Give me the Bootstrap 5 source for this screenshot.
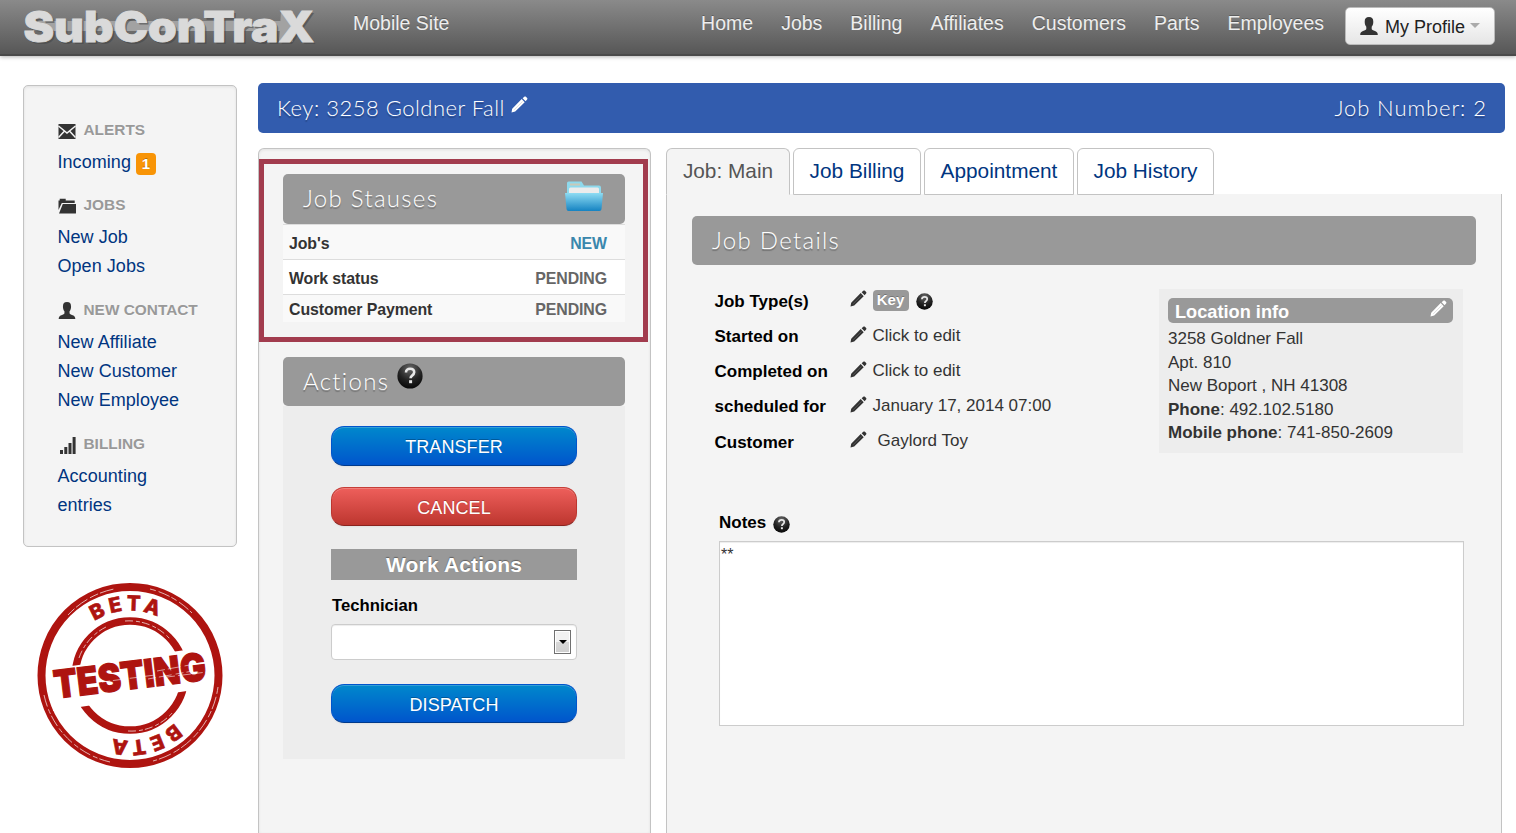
<!DOCTYPE html>
<html lang="en">
<head>
<meta charset="utf-8">
<meta name="viewport" content="width=device-width, initial-scale=1">
<title>SubConTraX - Job 2</title>
<link href="https://cdn.jsdelivr.net/npm/bootstrap@5.3.0/dist/css/bootstrap.min.css" rel="stylesheet">
<style>
body{font-family:"Liberation Sans",Arial,sans-serif;font-size:17px;line-height:23.6px;color:#333;background:#fff;height:833px;overflow:hidden}
a{color:#003580;text-decoration:none}
svg{display:block;flex:none}
.topbar{height:56px;padding:0 21px 0 23px;background:linear-gradient(#8a8a8a,#575757);border-bottom:2px solid #4a4a4a;box-shadow:0 1px 4px rgba(0,0,0,.3);align-items:flex-start}
.topbar .nav-link{font-size:19.5px;line-height:24px;color:#eee;padding:11px 0 0;text-shadow:0 -1px 0 rgba(0,0,0,.25)}
.mobile-link{margin-left:20px}
.main-links{gap:28px;margin-right:21px}
.profile-btn{width:150px;height:38px;margin-top:7px;padding:1px 0 0 14px;font-size:18px;line-height:24px;color:#222;background:linear-gradient(#fff,#e6e6e6);border:1px solid #bbb;border-radius:5px;display:flex;align-items:center}
.profile-btn svg{margin:-2px 7px 0 0;color:#333}
.caret{width:0;height:0;border:5px solid transparent;border-top-color:#aaa;border-bottom:0;margin:-3px 0 0 5px}
.side-col{width:235px;flex:none;margin-left:23px}
.side{width:214px;height:462px;margin-top:29px;padding:16px 33px 0 33.5px;background:#f4f4f4;border:1px solid #c3c3c3;border-radius:5px;box-shadow:inset 0 1px 3px rgba(0,0,0,.08)}
.side-head{height:47px;padding-top:10px;font-size:15.4px;font-weight:bold;color:#999;display:flex;align-items:center;white-space:nowrap;text-shadow:0 1px 0 rgba(255,255,255,.5)}
.side-head svg{margin:3px 8px 0 0}
.side a{display:block;font-size:18px;line-height:29px;letter-spacing:.05px}
.count{background:#f89406;color:#fff;font-size:15px;line-height:22px;width:20px;height:22px;border-radius:4px;padding:0;margin-left:5px;vertical-align:-1px;text-shadow:0 -1px 0 rgba(0,0,0,.25)}
.gothic{font-family:"Century Gothic","URW Gothic",Lato,sans-serif;font-weight:300;color:#fff;text-shadow:0 2px 1px rgba(0,0,0,.25);white-space:nowrap}
.keybar{height:50px;margin-top:27px;padding:0 19px 1px;background:#325cae;border-radius:5px;font-size:22px}
.key-title{letter-spacing:.5px}
.job-no{letter-spacing:.9px;margin-right:-.8px}
.panel-box{background:#f4f4f4;border:1px solid #c3c3c3;border-bottom:0}
.status-panel{width:393px;border-radius:6px 6px 0 0;box-shadow:inset 0 1px 3px rgba(0,0,0,.08)}
.frame{width:389px;height:183px;margin-top:10px;border:5px solid #a23c4e;padding:10px 18px 0 19px}
.gray-head{background:#999;border-radius:5px;height:49px;padding:0 20px 1px;font-size:24px;letter-spacing:1.3px;display:flex;align-items:center}
.st-row{border-top:1px solid #ddd;height:35px;padding:4px 18px 0 6px;display:flex;justify-content:space-between;align-items:center;font-size:15.9px;font-weight:bold;background:#f9f9f9;letter-spacing:-.1px}
.actions{margin:15px 25px 0 24px}
.action-body{background:#ededed;height:353px;padding:20px 48px 0}
.act{display:block;width:100%;height:39px;padding:2px 0 0;border-radius:13px;color:#fff;font-size:18px;line-height:34px;letter-spacing:.08px;text-shadow:0 -1px 0 rgba(0,0,0,.25);box-shadow:inset 0 1px 0 rgba(255,255,255,.2),0 1px 2px rgba(0,0,0,.05);border:1px solid}
.act:hover{color:#fff}
.act-blue{background:linear-gradient(#08c,#05c);border-color:#05c #05c #003a8c}
.act-red{background:linear-gradient(#ee5f5b,#bd362f);border-color:#c63e38 #bd362f #8a231e}
.work-head{height:31px;background:#999;color:#fff;font-size:21px;font-weight:bold;line-height:32px;letter-spacing:.15px;text-align:center;margin:23px 0 0;text-shadow:0 -1px 1px rgba(0,0,0,.35)}
.lbl{font-weight:bold;color:#000}
.pick{height:36px;background:#fff;border:1px solid #ccc;border-radius:4px;padding:5px;box-shadow:inset 0 1px 1px rgba(0,0,0,.075)}
.pick-arrow{width:17px;height:24px;border:1px solid #707070;background:linear-gradient(#f2f2f2 50%,#d8d8d8 50%,#cfcfcf);box-shadow:inset 0 0 0 1px #fff;display:flex;align-items:center;justify-content:center}
.pick-arrow i{border:4px solid transparent;border-top-color:#000;border-bottom:0}
.job-tabs{gap:3px;border:0;height:46px;flex-wrap:nowrap;position:relative;z-index:1}
.job-tabs .nav-link{height:47px;padding:10px 0 0;font-size:20.8px;line-height:24px;text-align:center;color:#003580;background:#fff;border:1px solid #c3c3c3;border-radius:6px 6px 0 0;margin:0}
.job-tabs .nav-link.active{background:#f4f4f4;color:#555;border-color:#c3c3c3 #c3c3c3 #f4f4f4}
.tab-main{width:124px}.tab-bill{width:128px}.tab-app{width:150px}.tab-hist{width:137px}
.detail-pane{width:836px;border-top:0;padding:22px 25px 0}
.fields{width:445px;padding:18px 0 0 22.5px}
.field{height:35.2px;display:flex;align-items:center}
.field .lbl{width:135px;padding-top:2px}
.field svg{margin:-3px 6px 0 0}
.key-tag{background:#999;color:#fff;font-size:15px;line-height:19px;height:21px;width:36px;padding:0;border-radius:4px;text-shadow:0 -1px 0 rgba(0,0,0,.25)}
.loc{width:304px;height:164px;margin:24px 13px 0 0;padding:9px 10px 0 9px;background:#ededed}
.loc-head{height:25px;background:#999;border-radius:5px;color:#fff;font-size:18.2px;font-weight:bold;line-height:28px;padding:0 6px 0 7px;margin-bottom:4px}
.notes{margin:44px 12px 0 27px}
.note-box{display:block;width:100%;height:185px;border:1px solid #ccc;border-radius:0;background:#fff;padding:2px 1px;font-size:16px;line-height:22px;color:#333;resize:none;box-shadow:inset 0 1px 1px rgba(0,0,0,.075)}
</style>
</head>
<body>
<svg width="0" height="0" class="position-absolute" aria-hidden="true">
<defs>
<symbol id="pencil" viewBox="0 0 17 17"><path d="M.5 16.500 1.200 12.800 10.700 3.100l3 3.200L4.200 15.600zM11.600 2.300 13.300.8c.5-.5 1.100-.5 1.600 0l1.200 1.200c.5.5.5 1.100 0 1.600L14.600 5.300z" fill="currentColor"/><path d="M3.300 13.800 11.500 5.500" stroke="#999" stroke-width=".5" opacity=".6"/></symbol>
<symbol id="user" viewBox="0 0 18 18"><path d="M9 0c3 0 4.300 1.500 4.300 4.700 0 2.300-.6 4-1.600 5v2.200c0 1 1.300 1.200 3.300 2 2 .8 2.800 1.800 2.800 4.100H.2c0-2.300.8-3.300 2.800-4.100 2-.8 3.300-1 3.300-2V9.700c-1-1-1.600-2.700-1.600-5C4.700 1.500 6 0 9 0z" fill="currentColor"/></symbol>
<radialGradient id="orb" cx=".5" cy=".2" r=".8"><stop offset="0" stop-color="#666"/><stop offset=".6" stop-color="#222"/><stop offset="1" stop-color="#080808"/></radialGradient>
<symbol id="help" viewBox="0 0 26 26"><circle cx="13" cy="13" r="12.600" fill="url(#orb)"/><path d="M9 9.500c0-2.300 1.700-3.700 4.100-3.700s4.100 1.400 4.100 3.500c0 1.700-1 2.500-2.100 3.300-1.100.8-1.500 1.300-1.500 2.700" fill="none" stroke="#e8e8e8" stroke-width="2.600"/><rect x="12.100" y="17.200" width="3" height="3" fill="#e8e8e8"/></symbol>
<linearGradient id="fold" x2="0" y2="1"><stop offset="0" stop-color="#8edcf3"/><stop offset="1" stop-color="#1583c2"/></linearGradient>
</defs>
</svg>

<nav class="topbar d-flex">
  <svg class="logo" width="310" height="54" viewBox="0 0 310 54" font-family="Inter,sans-serif" font-weight="900" font-size="42">
    <rect x="10" y="21" width="262" height="10" fill="#a2a2a2"/><path d="M258 11h12v31h-14z" fill="#a2a2a2"/>
    <text x="2.500" y="43.500" fill="#444" opacity=".55" textLength="291" lengthAdjust="spacingAndGlyphs">SubConTraX</text>
    <text x=".5" y="41.800" fill="#dadada" stroke="#dadada" stroke-width=".8" textLength="291" lengthAdjust="spacingAndGlyphs">SubConTraX</text>
  </svg>
  <a class="nav-link mobile-link" href="#">Mobile Site</a>
  <div class="main-links d-flex ms-auto">
    <a class="nav-link" href="#">Home</a><a class="nav-link" href="#">Jobs</a><a class="nav-link" href="#">Billing</a><a class="nav-link" href="#">Affiliates</a><a class="nav-link" href="#">Customers</a><a class="nav-link" href="#">Parts</a><a class="nav-link" href="#">Employees</a>
  </div>
  <button class="profile-btn" type="button"><svg width="18" height="18"><use href="#user"/></svg>My Profile<span class="caret"></span></button>
</nav>

<div class="d-flex">
  <aside class="side-col">
    <div class="side">
      <div class="side-head" style="height:46px"><svg width="18" height="15" viewBox="0 0 18 15"><rect x=".5" width="17" height="15" fill="#333"/><path d="M.5 2 9 9l8.500-7M.5 13.500l6-6.500M17.500 13.500l-6-6.500" fill="none" stroke="#f4f4f4" stroke-width="1.500"/></svg>ALERTS</div>
      <a href="#">Incoming<span class="badge count">1</span></a>
      <div class="side-head" style="height:45.600px"><svg width="18" height="16" viewBox="0 0 18 16"><path d="M.5 12V2.500h1.200V.8h6v1.700h9V5H3.800z" fill="#333"/><path d="M4.800 6H18.500v8.500l-.8 1H1z" fill="#333"/></svg>JOBS</div>
      <a href="#">New Job</a><a href="#">Open Jobs</a>
      <div class="side-head" style="height:47.600px"><svg width="18" height="17" style="color:#333"><use href="#user"/></svg>NEW CONTACT</div>
      <a href="#">New Affiliate</a><a href="#">New Customer</a><a href="#">New Employee</a>
      <div class="side-head"><svg width="18" height="17" viewBox="0 0 18 17"><path d="M2 13h3v4H2zM6.300 10h3v7h-3zM10.500 6h3v11h-3zM14.600 0h3v17h-3z" fill="#333"/></svg>BILLING</div>
      <a href="#">Accounting entries</a>
    </div>
    <svg width="220" height="210" viewBox="3 -5 220 210" style="margin-top:18px" font-family="Inter,Arial,sans-serif" fill="#ae1410">
      <defs><path id="arc" d="M45 105.500a65 65 0 0 1 130 0"/></defs>
      <g fill="none" stroke="#ae1410">
        <circle cx="110" cy="105.500" r="88.500" stroke-width="8"/>
        <circle cx="110" cy="105.500" r="54.500" stroke-width="7.500"/>
      </g>
      <g fill="none" stroke="#fff" stroke-width=".9" opacity=".75">
        <path d="M48 45a86 86 0 0 1 46-26" stroke-dasharray="9 2 14 3"/>
        <path d="M130 19a89 89 0 0 1 42 24" stroke-dasharray="6 3 12 2"/>
        <path d="M24 125a88 88 0 0 0 66 67" stroke-dasharray="12 3 5 2"/>
        <path d="M198 117a89 89 0 0 1-65 74" stroke-dasharray="7 3 13 2"/>
        <path d="M59 88a54 54 0 0 1 27-31M105 51a55 55 0 0 1 45 18M108 161a55 55 0 0 0 45-19" stroke-dasharray="8 3 4 2"/>
      </g>
      <path d="M30 99 187 77v41L33 141z" fill="#fff"/>
      <text transform="translate(35.500 128.500) rotate(-7)" font-weight="900" font-size="38.500" stroke="#ae1410" stroke-width="1.200" textLength="153" lengthAdjust="spacingAndGlyphs">TESTING</text>
      <path d="M82 112l53-7M128 109l45-8M137 101l49-9M147 107l40-5" stroke="#fff" stroke-width=".8" stroke-dasharray="8 3 13 4" opacity=".7"/>
      <g font-size="20.500" font-weight="800" stroke="#ae1410" stroke-width=".6"><text text-anchor="middle" textLength="66" transform="rotate(-4 110 105.500)"><textPath href="#arc" startOffset="50%">BETA</textPath></text>
      <text text-anchor="middle" textLength="66" transform="rotate(166 110 105.500)"><textPath href="#arc" startOffset="50%">BETA</textPath></text></g>
    </svg>
  </aside>

  <main style="width:1247px;flex:none">
    <div class="keybar gothic d-flex align-items-center justify-content-between">
      <div class="d-flex align-items-center"><span class="key-title">Key: 3258 Goldner Fall</span><svg width="17" height="17" style="margin:-7px 0 0 6px"><use href="#pencil"/></svg></div>
      <span class="job-no">Job Number: 2</span>
    </div>
    <div class="d-flex" style="height:685px;margin-top:15px;gap:15px">
      <section class="panel-box status-panel">
        <div class="frame">
          <div class="gray-head gothic justify-content-between" style="height:50px;padding-bottom:2px"><span>Job Stauses</span>
            <svg width="40" height="34" viewBox="0 0 40 34" style="margin:-3px 1px 0 0"><path d="M3 12V3q0-1.500 1.500-1.500h13L20 5.500h15q2 0 2 2V15H3z" fill="#8ed9ec"/><rect x="6" y="3.500" width="10" height="2" fill="#c9c9b8"/><path d="M5 9q0-1.500 1.500-1.500h27Q35 7.500 35 9v6H5z" fill="#ececec"/><path d="M1 13h38l-1.500 16q-.2 2-2 2H4.500q-1.800 0-2-2z" fill="url(#fold)"/></svg></div>
          <div class="st-row"><span>Job's</span><span style="color:#3a87ad">NEW</span></div>
          <div class="st-row" style="background:#fff"><span>Work status</span><span style="color:#666">PENDING</span></div>
          <div class="st-row" style="height:28px;padding-top:2px"><span>Customer Payment</span><span style="color:#666">PENDING</span></div>
        </div>
        <div class="actions">
          <div class="gray-head gothic"><span>Actions</span><svg width="26" height="26" style="margin:-11px 0 0 8px"><use href="#help"/></svg></div>
          <div class="action-body">
            <button class="btn act act-blue" style="height:40px">TRANSFER</button>
            <button class="btn act act-red" style="margin-top:21px">CANCEL</button>
            <h3 class="work-head">Work Actions</h3>
            <label class="lbl d-block" style="margin:14px 0 6.400px 1px;font-size:16.700px">Technician</label>
            <div class="pick d-flex justify-content-end"><span class="pick-arrow"><i></i></span></div>
            <button class="btn act act-blue" style="margin-top:24px;padding-top:3px">DISPATCH</button>
          </div>
        </div>
      </section>

      <section class="d-flex flex-column">
        <div class="nav nav-tabs job-tabs">
          <a class="nav-link active tab-main" href="#">Job: Main</a><a class="nav-link tab-bill" href="#">Job Billing</a><a class="nav-link tab-app" href="#">Appointment</a><a class="nav-link tab-hist" href="#">Job History</a>
        </div>
        <div class="panel-box detail-pane flex-grow-1">
          <div class="gray-head gothic"><span>Job Details</span></div>
          <div class="d-flex justify-content-between">
            <div class="fields">
              <div class="field"><span class="lbl">Job Type(s)</span><svg width="17" height="17" style="margin-top:-5px"><use href="#pencil"/></svg><span class="badge key-tag">Key</span><svg width="17" height="17" style="margin:1px 0 0 7px"><use href="#help"/></svg></div>
              <div class="field"><span class="lbl">Started on</span><svg width="17" height="17"><use href="#pencil"/></svg>Click to edit</div>
              <div class="field"><span class="lbl">Completed on</span><svg width="17" height="17"><use href="#pencil"/></svg>Click to edit</div>
              <div class="field"><span class="lbl">scheduled for</span><svg width="17" height="17"><use href="#pencil"/></svg>January 17, 2014 07:00</div>
              <div class="field"><span class="lbl">Customer</span><svg width="17" height="17"><use href="#pencil"/></svg><span style="padding:0 0 2px 5px">Gaylord Toy</span></div>
            </div>
            <div class="loc">
              <div class="loc-head d-flex justify-content-between"><span>Location info</span><svg width="17" height="17" style="margin-top:2px"><use href="#pencil"/></svg></div>
              3258 Goldner Fall<br>Apt. 810<br>New Boport , NH 41308<br><b>Phone</b>: 492.102.5180<br><b>Mobile phone</b>: 741-850-2609
            </div>
          </div>
          <div class="notes">
            <div class="d-flex align-items-center lbl" style="height:38px;padding-top:2px">Notes<svg width="17" height="17" style="margin:4px 0 0 7px"><use href="#help"/></svg></div>
            <textarea class="note-box">**</textarea>
          </div>
        </div>
      </section>
    </div>
  </main>
</div>
<script src="https://cdn.jsdelivr.net/npm/bootstrap@5.3.0/dist/js/bootstrap.bundle.min.js"></script>
</body>
</html>
